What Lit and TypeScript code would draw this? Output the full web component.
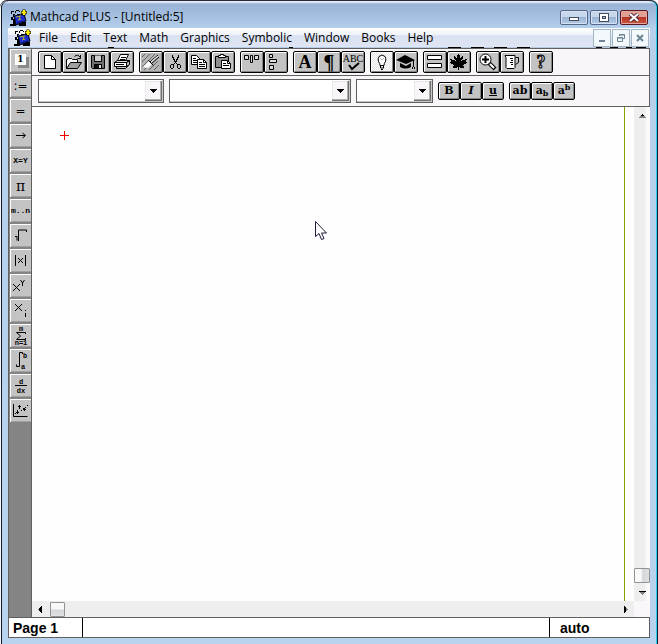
import { LitElement, html, svg, css, TemplateResult } from "lit";
import { customElement } from "lit/decorators.js";

type Glyph = TemplateResult;

const INK: Record<string, string> = {
  "#": "#000000",
  g: "#808080",
};

/** Turns rows of ink letters into one square pixel per letter. */
const bitmap = (rows: string[], dx = 0, dy = 0) =>
  rows.map((row, y) =>
    row.split("").map((ink, x) =>
      INK[ink] ? svg`<rect x=${dx + x} y=${dy + y} width="1" height="1" fill=${INK[ink]}></rect>` : null
    )
  );

const line = (d: string, width = 1, fill = "none") =>
  svg`<path d=${d} fill=${fill} stroke="#000" stroke-width=${width}></path>`;

const appIcon = () => html`<svg class="app-icon" width="17" height="17" viewBox="0 0 17 17" aria-hidden="true">
  <path d="M1 2.5h3M1.500 3v2M3 5.500h2M6 1.500h3M5.500 2v2M9.500 2v1M7 5.500h3M3.500 6v2" stroke="#000" stroke-width="1" fill="none"></path>
  <path d="M1 8h2v2h2l1 7H0v-2h3v-4H1zM8 13h8v4H9z" fill="#000"></path>
  <path d="M4 7l10-2 2 7-10 4z" fill="#1c2fd0" stroke="#000"></path>
  <path d="M6 8l5-1M8 11l3-1M9 7l1 4" stroke="#b8b030" fill="none"></path>
  <path d="M7 14l7-2" stroke="#0c1668" fill="none"></path>
  <path d="M11 3.500h6M14 .5v6" stroke="#000" stroke-width="3"></path>
  <path d="M11.500 3.500h5M14 1v5" stroke="#ffee00" stroke-width="2"></path>
</svg>`;

const maple = [
  "........#........",
  ".......###.......",
  "....#..###..#....",
  "....##.###.##....",
  "....#########....",
  "##...#######...##",
  ".####.#####.####.",
  ".###############.",
  "#################",
  ".###############.",
  "...###########...",
  "....#########....",
  "...###########...",
  "...####.#.####...",
  "........#........",
  "........#........",
];

const scissors = [
  "...#.....#...",
  "...#.....#...",
  "...##...##...",
  "....#...#....",
  "....##.##....",
  ".....#.#.....",
  ".....###.....",
  "......#......",
  ".....#.#.....",
  "..###...###..",
  ".#..#...#..#.",
  ".#..#...#..#.",
  ".#..#...#..#.",
  "..##.....##..",
];

interface Tool { label: string; art?: Glyph; text?: string; kind?: string; }

const tools: Tool[][] = [
  [
    { label: "New", art: svg`${line("M5.5 3.5h7l4 4v9h-11z", 1, "#fff")}${line("M12.5 3.5v4h4")}` },
    {
      label: "Open",
      art: svg`${line("M3.5 16.5v-9h1l1-1h3l1 1h5v3", 1, "#fff")}${line("M3.5 16.5l4-6h11l-4 6z", 1, "#a0a0a0")}${line("M11.5 4.5q3-3 6 1M17.5 3v3.5h-3")}`,
    },
    {
      label: "Save",
      art: svg`${line("M4.5 3.5h13v13h-12l-1-1z", 1, "#707070")}${line("M7.5 3.5v6h7v-6", 1, "#d0d0d0")}${line("M7.5 16.5v-4h7v4z", 1, "#111")}<rect x="12" y="13" width="2" height="3" fill="#ddd"></rect>`,
    },
    {
      label: "Print",
      art: svg`${line("M6.5 8.5l3-6h8l-3 6z", 1, "#fff")}${line("M10 5.5h5M9 7.5h5")}${line("M3.5 10.5l3-2h12l-3 2z", 1, "#ddd")}${line("M3.5 10.5h12v4h-12z", 1, "#fff")}${line("M15.5 10.5l3-2v4l-3 2M5.5 14.5v2h9l3-3M5 12.5h8")}`,
    },
  ],
  [
    {
      label: "Clean",
      kind: "hatched",
      art: svg`<path d="M2 5l3-3M2 10l8-8M2 15l13-13M4 18l4-4M9 18l9-9M14 18l5-5" stroke="#666"></path><path d="M3 15l6-6 3 3-4 4z" fill="#fff"></path>${line("M8.5 8.5l5 5M10 10l8-7M11 12l8-7", 1)}<path d="M11 10l7-6" stroke="#fff"></path>`,
    },
    { label: "Cut", art: svg`${bitmap(scissors, 5, 3)}` },
    {
      label: "Copy",
      art: svg`${line("M3.5 3.5h5l3 3v6h-8z", 1, "#fff")}${line("M5 6.5h3M5 8.5h5M5 10.5h4")}${line("M9.5 7.5h6l3 3v6h-9z", 1, "#fff")}${line("M11 10.5h3M11 12.5h6M11 14.5h6M15.5 7.5v3h3")}`,
    },
    {
      label: "Paste",
      art: svg`${line("M3.5 4.5h13v11h-13z", 1, "#909090")}${line("M6.5 5.5v-2h2v-1h3v1h2v2z", 1, "#fff")}${line("M9.5 8.5h6l3 3v5h-9z", 1, "#fff")}${line("M11 11.5h3M11 13.5h6M15.5 8.5v3h3")}`,
    },
  ],
  [
    { label: "Align across", art: svg`${line("M3.5 3.5h4v4h-4zM9.5 3.5h2v7h-2zM13.5 3.5h4v4h-4z", 1, "#ddd")}` },
    { label: "Align down", art: svg`${line("M4.5 2.5h3v3h-3zM4.5 7.5h7v3h-7zM4.5 13.5h4v4h-4z", 1, "#ddd")}` },
  ],
  [
    { label: "Text region", text: "A", kind: "letter" },
    { label: "Paragraph", text: "¶", kind: "letter heavy" },
    { label: "Spelling", text: "ABC", kind: "spell", art: svg`${line("M7 13l3 4 7-6", 2)}` },
  ],
  [
    {
      label: "Tips",
      kind: "pressed",
      art: svg`${line("M9 13.5q0-2-1.5-4q-1-3 .5-5q3-3 6 0q1.5 2 .5 5q-1.5 2-1.5 4z", 1, "#fff")}${line("M9.5 13v3h3v-3M10 17.5h2", 1)}<path d="M9 6l2 2 2-2" fill="none" stroke="#bbb"></path>`,
    },
    {
      label: "Tutorial",
      art: svg`<path d="M1 8l9-5 10 5-9 4z"></path><path d="M5 11l6 3 5-3v4q-5 3-11 0z"></path>${line("M18.5 8v7M17.5 15v2M19.5 15v2")}`,
    },
  ],
  [
    { label: "Equation bars", art: svg`${line("M3.5 3.5h14v4h-14zM3.5 11.5h14v4h-14z", 1, "#fff")}` },
    { label: "Maple", art: svg`${bitmap(maple, 2, 2)}` },
  ],
  [
    {
      label: "Zoom",
      art: svg`${line("M12 11l6 6", 4)}<path d="M13 12l4 4" stroke="#fff" stroke-width="2"></path><circle cx="8.5" cy="7.5" r="5.5" fill="#fff" stroke="#000"></circle>${line("M5 7.5h7M8.5 4v7", 2)}`,
    },
    {
      label: "Units",
      art: svg`${line("M4 3.5h10v12l-1 1h-7l-1-1v-10z", 1, "#fff")}${line("M14.5 5.5h3v5l-3 2M9 6.5h3M10 8.5h2M9 10.5h3M10 12.5h2")}`,
    },
  ],
  [{ label: "Help", text: "?", kind: "letter help" }],
];

const palette: Tool[] = [
  { label: "Arithmetic", text: "1", kind: "card" },
  { label: "Define", text: ":=", kind: "wide" },
  { label: "Evaluate", text: "=", kind: "wide" },
  { label: "Symbolic arrow", art: svg`${line("M6 11.5h9M12.5 9l3 2.5-3 2.5")}` },
  { label: "Boolean equals", text: "X=Y", kind: "tiny" },
  { label: "Pi", text: "π", kind: "pi" },
  { label: "Range", text: "m..n", kind: "tiny" },
  { label: "Square root", art: svg`${line("M5 12.5h2v4M8.5 17v-11h8v2")}` },
  { label: "Absolute value", art: svg`${line("M5.5 6v11M15.5 6v11M8 9l5 5M13 9l-5 5")}` },
  { label: "Power", art: svg`${line("M3 10l7 7M10 10l-7 7M10.5 6l2 3 2-3M12.5 9v3")}` },
  { label: "Subscript", art: svg`${line("M5 5l7 7M12 5l-7 7M15.5 14v4M15 11.5h1")}` },
  {
    label: "Summation",
    art: svg`<text x="11" y="7" class="mark">m</text>${line("M15.5 10v-1.500h-9l4 3.500-4 3.500h9v-1.500", 1)}<text x="11" y="21" class="mark">n=1</text>`,
  },
  {
    label: "Integral",
    art: svg`${line("M12.5 5v-1.5h-3v14h-3v-2")}<text x="15" y="9" class="mark">b</text><text x="13" y="20" class="mark">a</text>`,
  },
  { label: "Derivative", art: svg`<text x="11" y="10" class="mark">d</text>${line("M5 11.5h12")}<text x="11" y="19" class="mark">dx</text>` },
  {
    label: "Graph",
    art: svg`${line("M3.5 5v12.5h14")}<path d="M5 14.5h1M7 11.5h1M9 9.5h1M11 11.5h1M13 9.5h1M15 8.5h1M17 6.5h1" stroke="#000"></path>${line("M6 13.5h3M7.5 12v3M8 7.5h3M9.5 6v3M13 10.5h3M14.5 9v3")}`,
  },
];

const drawTool = (t: Tool, width: number, height: number) => html`<button type="button" class="tool ${t.kind ?? ""}" aria-label=${t.label}>
  ${t.text ? html`<span>${t.text}</span>` : null}
  ${t.art ? html`<svg width=${width} height=${height} viewBox="0 0 ${width} ${height}" aria-hidden="true">${t.art}</svg>` : null}
</button>`;

@customElement("app-root")
export class AppRoot extends LitElement {
  static styles = css`
    * { box-sizing: border-box; }
    :host {
      box-sizing: border-box;
      display: flex;
      flex-direction: column;
      min-height: 100vh;
      padding: 1px 8px 6px;
      background: linear-gradient(#e4eefa 1px, #9ab2d6 3px, #a3bfdf 14px, #b6d0ec 28px, #b9d3ee 100%);
      border-top: 1px solid #2c2836;
      border-radius: 7px 7px 0 0;
      box-shadow: inset 1px 0 #f4f8fc, inset 2px 0 #101820, inset -1px 0 #08202c, inset -2px 0 #30d0f0;
      font: 12px/18px "Open Sans", "Noto Sans", sans-serif;
      color: #000;
    }
    button { font: inherit; color: #000; padding: 0; margin: 0; }
    svg { display: block; }
    .app-icon { flex: none; }
    .title { display: flex; align-items: center; height: 26px; padding: 4px 2px 0; flex: none; }
    .title h1 { font: inherit; margin: 0 0 0 3px; flex: 1; white-space: nowrap; }
    .window-buttons { display: flex; gap: 2px; }
    .window-buttons button {
      display: grid; place-items: center;
      width: 28px; height: 15px;
      border: 1px solid #56688c; border-radius: 2px;
      background: linear-gradient(#c8d8ec 45%, #9cb4d4 50%, #b4cce8);
      box-shadow: inset 0 0 0 1px #d4e2f2;
    }
    .window-buttons .close {
      border-color: #5c1420;
      background: linear-gradient(#e0a094 45%, #b83424 50%, #cc5840);
      box-shadow: inset 0 0 0 1px #e0a8a0;
    }
    .menubar {
      display: flex; align-items: center; flex: none;
      height: 19px; padding: 0 1px 0 6px;
      background: linear-gradient(#ffffff, #f0f2f9 35%, #d9e0f0 40%, #dfe5f3);
    }
    nav { display: flex; gap: 12px; flex: 1; margin-left: 8px; }
    nav a { color: #000; text-decoration: none; }
    .child-buttons { display: flex; gap: 1px; }
    .child-buttons button {
      display: grid; place-items: center;
      width: 18px; height: 18px;
      border: 1px solid #a4b6c4; background: #f2f8fc;
    }
    .seam { height: 1px; background: linear-gradient(90deg, transparent, #b8c8dc); flex: none; overflow: hidden; }
    .body { display: flex; flex: 1; min-height: 0; border-top: 1px solid #606060; }
    .palette {
      display: flex; flex-direction: column; gap: 2px; flex: none;
      width: 24px; padding-left: 1px;
      background: #848484;
      border-left: 1px solid #606060; border-right: 1px solid #606060;
    }
    .main { flex: 1; min-width: 0; display: flex; flex-direction: column; }
    .bar {
      display: flex; align-items: center; gap: 5px; flex: none;
      padding: 0 6px; background: #f8f6f8;
      border-bottom: 1px solid #606060; border-right: 1px solid #606060;
    }
    .tools { height: 27px; }
    .format { height: 31px; }
    .group { display: flex; }
    .tool {
      display: grid; place-items: center; flex: none; overflow: hidden;
      width: 24px; height: 22px;
      border: 1px solid #000; border-radius: 2px;
      background: #c3c3c3;
      box-shadow: inset 1px 1px #fff, inset -1px -1px #868686;
    }
    .tool > * { grid-area: 1 / 1; }
    .tool span { line-height: 20px; }
    .palette .tool {
      width: 21px; height: 23px;
      border: 0; border-radius: 0;
      box-shadow: inset 1px 1px #fff, inset 0 -1px #a0a0a0;
    }
    .pressed { background: repeating-conic-gradient(#fff 0 25%, #e4e4e4 0 50%) 0 0 / 2px 2px; }
    .hatched { background: #b4b4b4; }
    .letter span { font: bold 18px/20px "Liberation Serif", serif; }
    .letter.heavy span { font-size: 20px; }
    .letter.help span { -webkit-text-stroke: 1px #000; color: #c3c3c3; }
    .spell span { font: 10px/12px "Liberation Serif", serif; align-self: start; margin-top: 1px; }
    .style { width: 22px; height: 18px; }
    .style span { font: bold 11px/16px "DejaVu Serif", serif; }
    .style i { font-style: italic; }
    .style u { text-decoration: underline; }
    .style sub, .style sup { font-size: 8px; line-height: 1px; }
    .style sub { vertical-align: -2px; }
    .style sup { vertical-align: 4px; }
    .card span {
      width: 11px; height: 11px; background: #fff;
      font: bold 9px/11px "DejaVu Serif", serif;
      box-shadow: 3px 3px #8a8a8a;
      margin-bottom: 2px;
    }
    .palette .wide span { font: 12px/14px "DejaVu Sans", sans-serif; }
    .palette .tiny span { font: bold 8px/12px "Liberation Mono", monospace; }
    .palette .pi span { font: 14px/16px "DejaVu Serif", serif; }
    .mark { font: bold 7px "Liberation Mono", monospace; text-anchor: middle; }
    .combo {
      position: relative; height: 24px;
      border: 1px solid #606060; background: #fff;
      padding: 1px; box-shadow: inset -1px -1px #c8c8c8;
    }
    .combo select {
      appearance: none; display: block;
      width: 100%; height: 100%;
      border: 0; background: transparent; font: inherit;
    }
    .combo svg {
      position: absolute; right: 1px; top: 1px; pointer-events: none;
      background: #f8f6f8;
      box-shadow: inset -1px -1px #707070, inset -2px -2px #b0b0b0, inset 1px 1px #e8e8e8;
    }
    .name { flex: 0 1 126px; }
    .font { flex: 0 1 182px; }
    .size { flex: 0 1 77px; }
    .sheet {
      flex: 1; display: grid;
      grid-template: minmax(0, 1fr) 16px / minmax(0, 1fr) 16px;
      background: #fefefe;
    }
    .page { position: relative; margin-right: 9px; border-right: 1px solid #8ca000; }
    .cross { position: absolute; left: 28px; top: 24px; }
    .pointer { position: absolute; left: 283px; top: 114px; }
    .scroll { display: flex; align-items: center; }
    .vertical {
      flex-direction: column; padding: 7px 0 6px;
      background: linear-gradient(90deg, #eeeeee 70%, #fafafa 75%);
    }
    .horizontal { background: #eeeeee; padding: 0 6px; }
    .space { flex: 1; }
    .thumb {
      width: 15px; height: 15px;
      border: 1px solid #909296; border-radius: 1px;
      background: linear-gradient(#f8f8f8 45%, #d4d6da 55%, #dfe1e4);
    }
    .vertical .thumb { width: 16px; background: linear-gradient(90deg, #f8f8f8 45%, #d4d6da 55%, #dfe1e4); margin-bottom: 8px; }
    .horizontal .thumb { margin-left: 8px; }
    .corner { background: #f9f7f9; }
    footer {
      display: flex; flex: none; height: 21px;
      border: 1px solid #606060; background: #fff;
      font: bold 14px/20px "Liberation Sans", sans-serif;
    }
    footer span { padding-left: 4px; }
    footer .page-no { width: 74px; border-right: 1px solid #000; }
    footer .message { flex: 1; }
    footer .mode { width: 100px; padding-left: 10px; border-left: 1px solid #000; }
  `;

  private combo(label: string, cls: string) {
    return html`<div class="combo ${cls}">
      <select aria-label=${label}><option></option></select>
      <svg width="17" height="20" viewBox="0 0 17 20" shape-rendering="crispEdges" aria-hidden="true">
        ${bitmap(["#######", ".#####.", "..###..", "...#..."], 5, 8)}
      </svg>
    </div>`;
  }

  private styleButton(label: string, content: TemplateResult) {
    return html`<button type="button" class="tool style" aria-label=${label}><span>${content}</span></button>`;
  }

  private arrow(rows: string[]) {
    const w = rows[0].length;
    return html`<svg width=${w} height=${rows.length} viewBox="0 0 ${w} ${rows.length}" shape-rendering="crispEdges" aria-hidden="true">${bitmap(rows)}</svg>`;
  }

  render() {
    const menus = ["File", "Edit", "Text", "Math", "Graphics", "Symbolic", "Window", "Books", "Help"];
    return html`
      <header class="title">
        ${appIcon()}
        <h1>Mathcad PLUS - [Untitled:5]</h1>
        <div class="window-buttons">
          <button type="button" aria-label="Minimize">
            <svg width="12" height="9" viewBox="0 0 12 9"><rect x="1.5" y="4.5" width="9" height="3" fill="#fff" stroke="#444c5c"></rect></svg>
          </button>
          <button type="button" aria-label="Restore">
            <svg width="12" height="9" viewBox="0 0 12 9"><rect x="1.5" y=".5" width="9" height="8" fill="#fff" stroke="#444c5c"></rect><rect x="4.5" y="3.5" width="3" height="2" fill="#9cb4d4" stroke="#444c5c"></rect></svg>
          </button>
          <button type="button" class="close" aria-label="Close">
            <svg width="12" height="9" viewBox="0 0 12 9"><path d="M2 1l8 7M10 1l-8 7" stroke="#553040" stroke-width="4"></path><path d="M2 1l8 7M10 1l-8 7" stroke="#fff" stroke-width="2"></path></svg>
          </button>
        </div>
      </header>
      <div class="menubar">
        ${appIcon()}
        <nav>${menus.map((m) => html`<a href="#">${m}</a>`)}</nav>
        <div class="child-buttons">
          <button type="button" aria-label="Minimize document">
            <svg width="10" height="10" viewBox="0 0 10 10"><path d="M2 8h6" stroke="#6c8494" stroke-width="2"></path></svg>
          </button>
          <button type="button" aria-label="Restore document">
            <svg width="10" height="10" viewBox="0 0 10 10" fill="none" stroke="#6c8494"><path d="M3.5 3V1.5h5v4H7M3 2h6"></path><path d="M1.5 4.5h5v4h-5zM1 5h6"></path></svg>
          </button>
          <button type="button" aria-label="Close document">
            <svg width="10" height="10" viewBox="0 0 10 10"><path d="M2 2l6 6M8 2l-6 6" stroke="#6c8494" stroke-width="2"></path></svg>
          </button>
        </div>
      </div>
      <div class="seam">
        <svg width="642" height="1" viewBox="0 0 642 1" aria-hidden="true"><path d="M100 .5h6M281 .5h4M440 .5h13M463 .5h13M486 .5h13M509 .5h13M588 .5h6M602 .5h8M618 .5h6M628 .5h10" stroke="#000"></path></svg>
      </div>
      <div class="body">
        <aside class="palette">${palette.map((t) => drawTool(t, 21, 23))}</aside>
        <div class="main">
          <div class="bar tools">${tools.map((g) => html`<div class="group">${g.map((t) => drawTool(t, 22, 20))}</div>`)}</div>
          <div class="bar format">
            ${this.combo("Style", "name")} ${this.combo("Font", "font")} ${this.combo("Size", "size")}
            <div class="group">
              ${this.styleButton("Bold", html`B`)} ${this.styleButton("Italic", html`<i>I</i>`)} ${this.styleButton("Underline", html`<u>u</u>`)}
            </div>
            <div class="group">
              ${this.styleButton("Normal", html`ab`)} ${this.styleButton("Subscript", html`a<sub>b</sub>`)} ${this.styleButton("Superscript", html`a<sup>b</sup>`)}
            </div>
          </div>
          <div class="sheet">
            <div class="page">
              <svg class="cross" width="9" height="9" viewBox="0 0 9 9" aria-hidden="true"><path d="M0 4.5h9M4.5 0v9" stroke="#f00000"></path></svg>
              <svg class="pointer" width="13" height="20" viewBox="0 0 13 20" aria-hidden="true"><path d="M.5.5v15l3.500-3 2.500 6 2.500-1-2.500-5.500h5z" fill="#fff" stroke="#1c1c38"></path></svg>
            </div>
            <div class="scroll vertical">
              ${this.arrow(["...#...", "..###..", ".ggggg.", "ggggggg"])}
              <div class="space"></div>
              <div class="thumb"></div>
              ${this.arrow(["#######", ".ggggg.", "..ggg..", "...g..."])}
            </div>
            <div class="scroll horizontal">
              ${this.arrow(["...#", "..##", ".###", "g###", ".###", "..##", "...#"])}
              <div class="thumb"></div>
              <div class="space"></div>
              ${this.arrow(["#...", "##..", "##g.", "##gg", "##g.", "##..", "#..."])}
            </div>
            <div class="corner"></div>
          </div>
        </div>
      </div>
      <footer>
        <span class="page-no">Page 1</span>
        <span class="message"></span>
        <span class="mode">auto</span>
      </footer>
    `;
  }
}
